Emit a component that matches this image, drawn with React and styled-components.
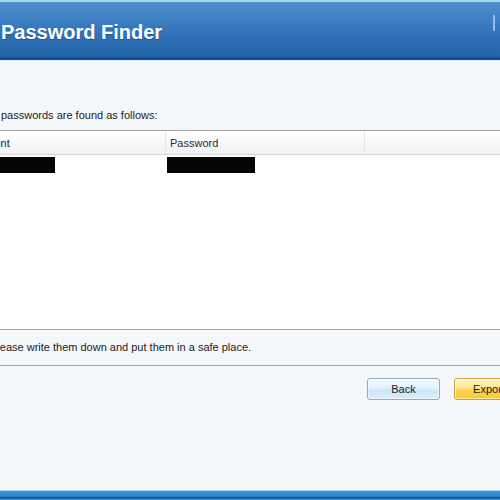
import React from 'react';
import styled, { createGlobalStyle } from 'styled-components';

const GlobalStyle = createGlobalStyle`
  html, body {
    margin: 0;
    padding: 0;
    background: #f5f8fb;
    overflow: hidden;
  }
  * {
    box-sizing: border-box;
  }
`;

const Viewport = styled.div`
  width: 500px;
  height: 500px;
  overflow: hidden;
  background: #f5f8fb;
`;

// the dialog is wider than the shot, so it is shifted left and clipped
const Window = styled.div`
  width: 574px;
  height: 500px;
  margin-left: -34px;
  display: flex;
  flex-direction: column;
  font-family: 'Liberation Sans', Arial, sans-serif;
  font-size: 11px;
  color: #1c1c1c;
`;

const TitleBar = styled.div`
  height: 60px;
  flex-shrink: 0;
  display: flex;
  align-items: center;
  justify-content: space-between;
  padding: 5px 45px 0 35px;
  border-top: 2px solid #a3d8ee;
  border-bottom: 3px solid #1a4d86;
  background: linear-gradient(
    to bottom,
    #5090cd 0%,
    #3d7ec1 35%,
    #2d6eb6 65%,
    #2263a9 100%
  );
  box-shadow: 0 1px 0 #dfeaf4;
`;

const Title = styled.h1`
  margin: 0;
  font-family: 'Liberation Sans', Arial, sans-serif;
  font-size: 20px;
  font-weight: 700;
  color: #ffffff;
  text-shadow: 0 1px 1px rgba(10, 40, 80, 0.35);
`;

const Grip = styled.span`
  width: 2px;
  height: 16px;
  margin-bottom: 18px;
  background: #a9cbe9;
  opacity: 0.8;
`;

const Intro = styled.p`
  margin: 48px 0 8px;
  padding-left: 35px;
  line-height: 14px;
  color: #222;
`;

const ListView = styled.div`
  height: 200px;
  flex-shrink: 0;
  background: #ffffff;
  border-top: 1px solid #a4a4a4;
  border-bottom: 1px solid #a4a4a4;
  display: flex;
  flex-direction: column;
`;

const HeaderRow = styled.div`
  display: flex;
  height: 24px;
  border-bottom: 1px solid #d9d9d9;
  background: linear-gradient(to bottom, #ffffff 0%, #f7f8fa 55%, #eff1f4 100%);
`;

const HeaderCell = styled.div`
  width: ${(p) => (p.$width ? `${p.$width}px` : 'auto')};
  flex: ${(p) => (p.$width ? 'none' : '1')};
  display: flex;
  align-items: center;
  padding-left: 4px;
  border-right: ${(p) => (p.$width ? '1px solid #e4e5e8' : 'none')};
  color: #2a2a2a;
`;

const Row = styled.div`
  display: flex;
  height: 18px;
  padding-top: 2px;
`;

const Cell = styled.div`
  width: ${(p) => p.$width}px;
  padding-left: 1px;
`;

const Redacted = styled.div`
  width: 88px;
  height: 16px;
  background: #050505;
`;

const Note = styled.p`
  margin: 0;
  height: 36px;
  flex-shrink: 0;
  display: flex;
  align-items: center;
  padding-left: 24px;
  padding-bottom: 1px;
  border-bottom: 1px solid #a4a4a4;
  color: #222;
`;

const ButtonRow = styled.div`
  display: flex;
  justify-content: flex-end;
  gap: 14px;
  margin-top: 12px;
  padding-right: 16px;
`;

const Button = styled.button`
  width: ${(p) => (p.$primary ? 70 : 73)}px;
  height: 22px;
  padding: 0;
  border-radius: 3px;
  font-family: 'Liberation Sans', Arial, sans-serif;
  font-size: 11px;
  color: #1a1a1a;
  border: 1px solid ${(p) => (p.$primary ? '#c9a23e' : '#90abc3')};
  background: ${(p) =>
    p.$primary
      ? 'linear-gradient(to bottom, #fff4c8 0%, #ffe58a 45%, #ffd54a 55%, #f8c93a 100%)'
      : 'linear-gradient(to bottom, #f4fafe 0%, #e4f2fc 45%, #cbe6f8 55%, #d9eefb 100%)'};
  box-shadow: inset 0 0 0 1px rgba(255, 255, 255, 0.6);
`;

const Footer = styled.div`
  margin-top: auto;
  height: 10px;
  flex-shrink: 0;
  border-top: 1px solid #a6dcf3;
  background: linear-gradient(
    to bottom,
    #3c96de 0%,
    #2a84cf 60%,
    #16528f 70%,
    #16528f 80%,
    #3a8bd0 90%,
    #3a8bd0 100%
  );
`;

const entries = [{ account: 'hidden', password: 'hidden' }];

export default function App() {
  return (
    <Viewport>
      <GlobalStyle />
      <Window>
        <TitleBar>
          <Title>Password Finder</Title>
          <Grip />
        </TitleBar>
        <Intro>passwords are found as follows:</Intro>
        <ListView>
          <HeaderRow>
            <HeaderCell $width={200}>Account</HeaderCell>
            <HeaderCell $width={199}>Password</HeaderCell>
            <HeaderCell />
          </HeaderRow>
          {entries.map((e, i) => (
            <Row key={i}>
              <Cell $width={200}>
                <Redacted />
              </Cell>
              <Cell $width={199}>
                <Redacted />
              </Cell>
            </Row>
          ))}
        </ListView>
        <Note>Please write them down and put them in a safe place.</Note>
        <ButtonRow>
          <Button>Back</Button>
          <Button $primary>Export</Button>
        </ButtonRow>
        <Footer />
      </Window>
    </Viewport>
  );
}
